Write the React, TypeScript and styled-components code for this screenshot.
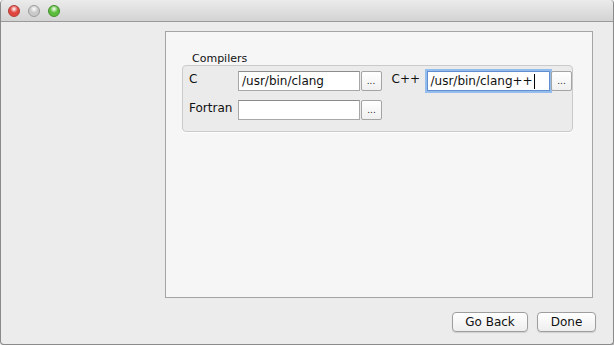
import styled, { createGlobalStyle } from 'styled-components'

const GlobalStyle = createGlobalStyle`
  html, body {
    margin: 0;
    padding: 0;
    background: #ffffff;
  }
  body {
    font-family: "DejaVu Sans", "Liberation Sans", sans-serif;
    font-size: 12px;
    color: #111;
  }
`

const Window = styled.div`
  width: 612px;
  height: 344px;
  display: flex;
  flex-direction: column;
  background: #ececec;
  border: 1px solid #8a8a8a;
  border-top: 0;
  border-radius: 4px;
  box-shadow: 1px 1px 2px rgba(0, 0, 0, 0.35);
  overflow: hidden;
`

const TitleBar = styled.div`
  height: 21px;
  flex-shrink: 0;
  display: flex;
  align-items: center;
  gap: 8px;
  padding-left: 7px;
  background: linear-gradient(#ebebeb, #d3d3d3);
  border-bottom: 1px solid #9a9a9a;
  border-radius: 4px 4px 0 0;
`

const Light = styled.span<{ $color: string; $edge: string }>`
  width: 12px;
  height: 12px;
  border-radius: 50%;
  box-sizing: border-box;
  border: 1px solid ${(p) => p.$edge};
  background: radial-gradient(circle at 50% 30%, #ffffff 0%, ${(p) => p.$color} 45%, ${(p) => p.$color} 100%);
`

const Body = styled.div`
  flex: 1;
  display: flex;
  flex-direction: column;
  padding: 9px 20px 13px 164px;
`

const Panel = styled.div`
  height: 267px;
  box-sizing: border-box;
  background: #f6f6f6;
  border: 1px solid #a4a4a4;
  padding: 20px 16px 0 16px;
`

const GroupTitle = styled.div`
  font-size: 11px;
  padding-left: 10px;
  height: 13px;
  line-height: 13px;
`

const GroupBox = styled.div`
  width: 391px;
  height: 67px;
  box-sizing: border-box;
  background: #ebebeb;
  border: 1px solid #cacaca;
  border-radius: 4px;
  padding: 5px 0 0 6px;
  display: flex;
  flex-direction: column;
  gap: 9px;
  box-shadow: 0 1px 0 rgba(255, 255, 255, 0.8);
`

const Row = styled.div`
  display: flex;
  align-items: center;
  height: 20px;
`

const Label = styled.span<{ $w: number }>`
  width: ${(p) => p.$w}px;
  flex-shrink: 0;
  font-size: 12px;
  position: relative;
  top: -2px;
`

const Field = styled.div<{ $w: number; $focus?: boolean }>`
  width: ${(p) => p.$w}px;
  height: 20px;
  box-sizing: border-box;
  background: #fff;
  border: 1px solid ${(p) => (p.$focus ? '#5f8fd0' : '#a8a8a8')};
  border-top-color: ${(p) => (p.$focus ? '#5f8fd0' : '#8c8c8c')};
  box-shadow: ${(p) => (p.$focus ? '0 0 0 2px #94bcec' : 'none')};
  display: flex;
  align-items: center;
  padding-left: 3px;
  font-size: 12px;
  white-space: nowrap;
`

const Caret = styled.span`
  display: inline-block;
  width: 1px;
  height: 15px;
  background: #000;
  margin-left: 1px;
`

const Browse = styled.button`
  width: 21px;
  height: 20px;
  box-sizing: border-box;
  padding: 0;
  margin: 0 0 0 1px;
  background: linear-gradient(#ffffff, #f0f0f0);
  border: 1px solid #a4a4a4;
  border-radius: 2px;
  font-family: inherit;
  font-size: 9px;
  line-height: 14px;
  color: #222;
`

const Spacer = styled.div`
  width: 10px;
  flex-shrink: 0;
`

const Footer = styled.div`
  display: flex;
  justify-content: flex-end;
  gap: 9px;
  margin-top: 14px;
  margin-right: -3px;
`

const PushButton = styled.button<{ $w: number }>`
  width: ${(p) => p.$w}px;
  height: 20px;
  box-sizing: border-box;
  padding: 0;
  background: linear-gradient(#ffffff, #eeeeee);
  border: 1px solid #9e9e9e;
  border-radius: 4px;
  font-family: inherit;
  font-size: 12px;
  color: #111;
  box-shadow: 0 1px 1px rgba(0, 0, 0, 0.12);
`

export default function App() {
  return (
    <>
      <GlobalStyle />
      <Window>
        <TitleBar>
          <Light $color="#e0443e" $edge="#b23a33" />
          <Light $color="#c9c9c9" $edge="#9c9c9c" />
          <Light $color="#5cbd3a" $edge="#3f8d2a" />
        </TitleBar>
        <Body>
          <Panel>
            <GroupTitle>Compilers</GroupTitle>
            <GroupBox>
              <Row>
                <Label $w={49}>C</Label>
                <Field $w={122}>/usr/bin/clang</Field>
                <Browse>...</Browse>
                <Spacer />
                <Label $w={35}>C++</Label>
                <Field $w={124} $focus>
                  /usr/bin/clang++
                  <Caret />
                </Field>
                <Browse>...</Browse>
              </Row>
              <Row>
                <Label $w={49}>Fortran</Label>
                <Field $w={122} />
                <Browse>...</Browse>
              </Row>
            </GroupBox>
          </Panel>
          <Footer>
            <PushButton $w={76}>Go Back</PushButton>
            <PushButton $w={59}>Done</PushButton>
          </Footer>
        </Body>
      </Window>
    </>
  )
}
